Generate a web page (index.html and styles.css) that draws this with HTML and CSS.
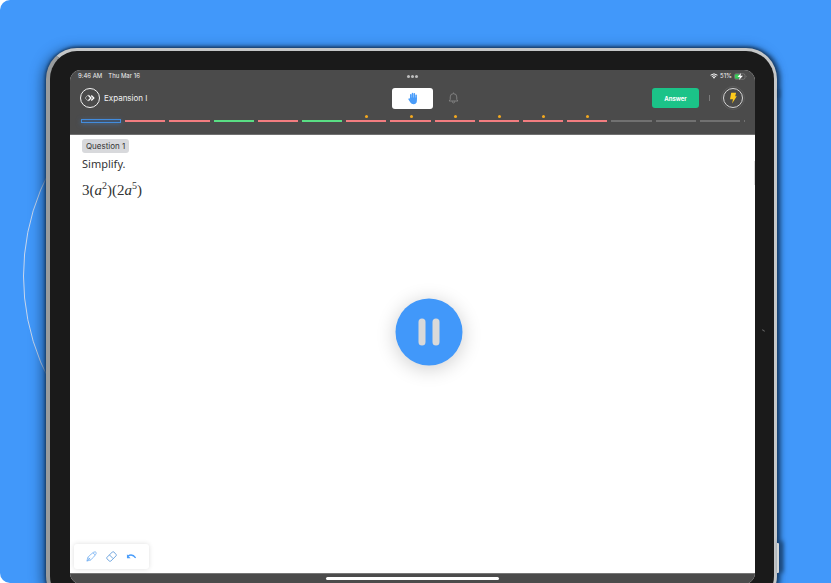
FILE: index.html
```html
<!DOCTYPE html>
<html lang="en">
<head>
<meta charset="utf-8">
<title>Expansion I</title>
<link rel="stylesheet" href="styles.css">
</head>
<body>
<div class="stage">
  <div class="ring"></div>
  <div class="tablet">
    <span class="side-button volume"></span>
    <span class="side-button power"></span>
    <span class="camera"></span>
    <div class="screen">
      <header class="header">
        <div class="status">
          <div class="status-left"><span>9:46 AM</span><span>Thu Mar 16</span></div>
          <div class="dots"><i></i><i></i><i></i></div>
          <div class="status-right">
            <svg class="wifi" viewBox="0 0 14 10"><path d="M1 3.6Q7-1.2 13 3.6M3.2 6Q7 3 10.800 6" fill="none" stroke="#fff" stroke-width="1.700"/><path d="M4.800 7.300Q7 5.800 9.200 7.300L7 9.800z" fill="#fff"/></svg>
            <span>51%</span>
            <svg class="battery" viewBox="0 0 26 14"><rect x="1" y="1.500" width="21" height="11" rx="3.500" fill="none" stroke="#999" stroke-width="1"/><rect x="2" y="2.500" width="9" height="9" rx="2" fill="#3ccb5a"/><path d="M24 5v4q1.500-2 0-4z" fill="#999"/><path d="M14 0L7 8h4.500L10 14l8-8.500h-5z" fill="#fff"/></svg>
          </div>
        </div>
        <div class="toolbar">
          <div class="lesson">
            <button class="round" aria-label="Back to lessons"><svg viewBox="0 0 20 20"><path d="M9.200 7.600L7.900 7.100 5.200 10l2.700 2.900 1.300-.5" fill="none" stroke="#bbb" stroke-width=".8"/><path d="M8.500 7.500L11 10l-2.500 2.500M11.300 7.500L13.800 10l-2.500 2.500" fill="none" stroke="#fff" stroke-width="1.300"/></svg></button>
            <h1>Expansion I</h1>
          </div>
          <button class="hand" aria-label="Raise hand"><svg viewBox="0 0 24 26"><path d="M7.500 14V5.500M11 13V3M14.700 13V3.500M18.300 14V6.500" stroke="#4a9dfa" stroke-width="3" stroke-linecap="round"/><path d="M3.400 12.800q1.600-1 3 1L7.500 15.500 6 11h13.800v6q0 7.500-7 7.500-4 0-6-3.500L2.900 15q-.8-1.400.5-2.200z" fill="#4a9dfa"/></svg></button>
          <div class="actions">
            <button class="bell" aria-label="Notifications"><svg viewBox="0 0 20 22"><path d="M2 16.500h16l-2-3V9q0-6-6-6T4 9v4.500zM7.700 17q0 3 2.300 3t2.300-3M10 1v2" fill="none" stroke="#858585" stroke-width="1.700" stroke-linejoin="round"/></svg></button>
            <button class="answer">Answer</button>
            <span class="divider"></span>
            <button class="round bolt" aria-label="Energy"><svg viewBox="0 0 20 20"><path d="M8.200 4.800h4.900l-.9 3.500h1.600l-4.700 7.100.9-4.200H7z" fill="#fdcb1c"/></svg></button>
          </div>
        </div>
        <div class="progress">
          <span class="current"></span><span class="wrong"></span><span class="wrong"></span><span class="right"></span><span class="wrong"></span><span class="right"></span>
          <span class="wrong marked"></span><span class="wrong marked"></span><span class="wrong marked"></span><span class="wrong marked"></span><span class="wrong marked"></span><span class="wrong marked"></span>
          <span></span><span></span><span></span><span class="tail"></span>
        </div>
      </header>
      <main class="workspace">
        <h2 class="tag">Question 1</h2>
        <p class="prompt">Simplify.</p>
        <p class="formula">3(<i>a</i><sup>2</sup>)(2<i>a</i><sup>5</sup>)</p>
        <span class="scrollbar"></span>
        <button class="pause" aria-label="Pause"><i></i><i></i></button>
        <div class="tools">
          <button aria-label="Pencil"><svg viewBox="0 0 24 24"><path d="M2 22l2-8Q12 5 17 2.500q4-1.500 5 .5 1 2-1 4.500-4 6.500-11 12zM4 14l6 5.500M2 22l7-7M15 4l5 4.500" fill="none" stroke="#74b0f2" stroke-width="1.800"/></svg></button>
          <button aria-label="Eraser"><svg viewBox="0 0 24 24"><path d="M2 14L14 2q1.500-1 3 0l5 5.500q1 1.500 0 3L10.500 22q-1.500 1-3 0L2 17q-1-1.500 0-3zM7.500 8.500l8 8" fill="none" stroke="#5595d8" stroke-width="1.800"/></svg></button>
          <button aria-label="Undo"><svg viewBox="0 0 24 24"><path d="M4 11Q14 5 21 15" fill="none" stroke="#4a9dfa" stroke-width="2.800"/><path d="M2 7v9h8z" fill="#4a9dfa"/></svg></button>
        </div>
      </main>
      <footer class="home"><span></span></footer>
    </div>
  </div>
</div>
</body>
</html>
```
FILE: styles.css
```css
* { box-sizing: border-box; }
body {
  margin: 0;
  background: #fff;
  font-family: Inter, "Liberation Sans", sans-serif;
}
button {
  display: flex;
  align-items: center;
  justify-content: center;
  padding: 0;
  border: 0;
  background: none;
  font: inherit;
  color: inherit;
}
h1, h2, p { margin: 0; font-weight: 400; }
svg { display: block; }

.stage {
  position: relative;
  height: 100vh;
  padding: 48px 54px 0 46px;
  border-radius: 10px 0 0 10px;
  background: #4198fa;
  overflow: hidden;
}
.ring {
  position: absolute;
  left: 23px;
  top: 51px;
  width: 450px;
  height: 450px;
  border: 1px solid #c8d6ec;
  border-radius: 50%;
}
.tablet {
  position: relative;
  height: calc(100vh - 24px);
  padding: 19px 19px 20px 20px;
  border: solid #c5c7c8;
  border-width: 3px 3px 3px 4px;
  border-left-color: #999c9d;
  border-radius: 31px;
  background: #1a1a1a;
  box-shadow: 0 0 3px 1px #173d68, 3px 0 4px 1px #173d68b0, -3px 2px 13px #0c2c50b0;
}
.side-button {
  position: absolute;
  left: 100%;
  margin-left: 3px;
  border-radius: 0 1px 1px 0;
}
.volume {
  top: 38px;
  width: 1px;
  height: 9px;
  background: #173d68;
  box-shadow: 2px 0 3px #173d68;
}
.power {
  bottom: 31px;
  width: 2px;
  height: 30px;
  background: #d4d6d6;
  box-shadow: 3px -1px 4px 1px #173d68;
}
.camera {
  position: absolute;
  right: 9px;
  top: 279px;
  width: 3px;
  height: 1px;
  background: #666;
  transform: rotate(35deg);
}
.screen {
  display: flex;
  flex-direction: column;
  height: 100%;
  border-radius: 11px;
  background: #fff;
  overflow: hidden;
}

.header {
  height: 65px;
  background: #4b4b4b;
  border-bottom: 1px solid #707070;
  color: #f1f1f1;
}
.status {
  display: grid;
  grid-template-columns: 1fr auto 1fr;
  align-items: center;
  height: 12px;
  padding: 0 8px;
  font-size: 6px;
  line-height: 12px;
}
.status-left, .status-right, .dots { display: flex; align-items: center; }
.status-left { gap: 6px; }
.status-right { justify-content: flex-end; gap: 2px; }
.dots { gap: 1px; }
.dots i { width: 3px; height: 3px; border-radius: 50%; background: #bdbdbd; }
.wifi { width: 8px; height: 6px; }
.battery { width: 13px; height: 7px; }

.toolbar {
  display: grid;
  grid-template-columns: 1fr 41px 1fr;
  align-items: center;
  height: 32px;
  padding: 0 10px;
}
.lesson, .actions { display: flex; align-items: center; }
.lesson { gap: 4px; }
.lesson h1 { font-size: 8px; line-height: 12px; }
.round {
  width: 20px;
  height: 20px;
  border: 1px solid #f4f4f4;
  border-radius: 50%;
}
.round svg { width: 20px; height: 20px; flex: none; }
.bolt {
  margin-right: 2px;
  border-color: #d5d5d5;
  outline: 1px solid #5a5a5a;
  outline-offset: 1px;
}
.hand {
  height: 21px;
  border-radius: 3px;
  background: #fff;
}
.hand svg { width: 12px; height: 13px; }
.bell { margin: 0 auto 0 15px; }
.bell svg { width: 11px; height: 12px; }
.answer {
  width: 47px;
  height: 20px;
  border-radius: 3px;
  background: #1bc388;
  color: #fff;
  font-size: 6px;
  font-weight: 700;
}
.divider {
  width: 1px;
  height: 6px;
  margin: 0 13px 0 10px;
  background: #7b7b7b;
}

.progress {
  display: flex;
  gap: 4px;
  align-items: center;
  height: 14px;
  padding: 0 10px 0 11px;
}
.progress span {
  position: relative;
  flex: 1;
  height: 2px;
  background: #717171;
}
.progress .wrong { background: #f27d80; }
.progress .right { background: #59de84; }
.progress .current {
  height: 4px;
  background: #41546d;
  box-shadow: inset 0 0 0 1px #438cdc, 0 1px 5px #4a6687;
}
.progress .tail { flex: 0 0 1px; }
.progress .marked::before {
  content: "";
  position: absolute;
  left: calc(50% - 1px);
  top: -5px;
  width: 3px;
  height: 3px;
  border-radius: 50%;
  background: #f3a91f;
}

.workspace {
  position: relative;
  display: flex;
  flex: 1;
  flex-direction: column;
  align-items: flex-start;
  padding: 4px;
  color: #333;
}
.tag {
  margin-left: 8px;
  padding: 0 4px;
  border-radius: 3px;
  background: #d8d9dc;
  font-size: 8px;
  line-height: 14px;
}
.prompt {
  margin: 3px 0 0 8px;
  font-family: "Noto Sans", sans-serif;
  font-size: 11px;
  line-height: 16px;
}
.formula {
  margin: 8px 0 0 8px;
  font-family: "Liberation Serif", serif;
  font-size: 15px;
  line-height: 20px;
}
.formula sup { font-size: 10px; line-height: 0; }
.scrollbar {
  position: absolute;
  right: 0;
  top: 26px;
  width: 1px;
  height: 24px;
  background: #ddd;
}
.pause {
  position: absolute;
  left: 52.4%;
  top: 44.9%;
  gap: 7px;
  width: 67px;
  height: 67px;
  border-radius: 50%;
  background: #4198fa;
  box-shadow: 0 3px 20px #0003;
  transform: translate(-50%, -50%);
}
.pause i { width: 7px; height: 27px; border-radius: 4px; background: #d9d9d9; }
.tools {
  display: flex;
  gap: 8px;
  align-items: center;
  margin-top: auto;
  padding: 6px 12px 7px 11px;
  border-radius: 3px;
  background: #fff;
  box-shadow: 0 0 5px #0002;
}
.tools button { width: 12px; height: 12px; }
.tools svg { width: 11px; height: 11px; }

.home {
  display: flex;
  align-items: center;
  justify-content: center;
  height: 11px;
  padding-bottom: 2px;
  border-top: 1px solid #777;
  background: #4b4b4b;
}
.home span { width: 173px; height: 3px; border-radius: 2px; background: #fff; }
```
